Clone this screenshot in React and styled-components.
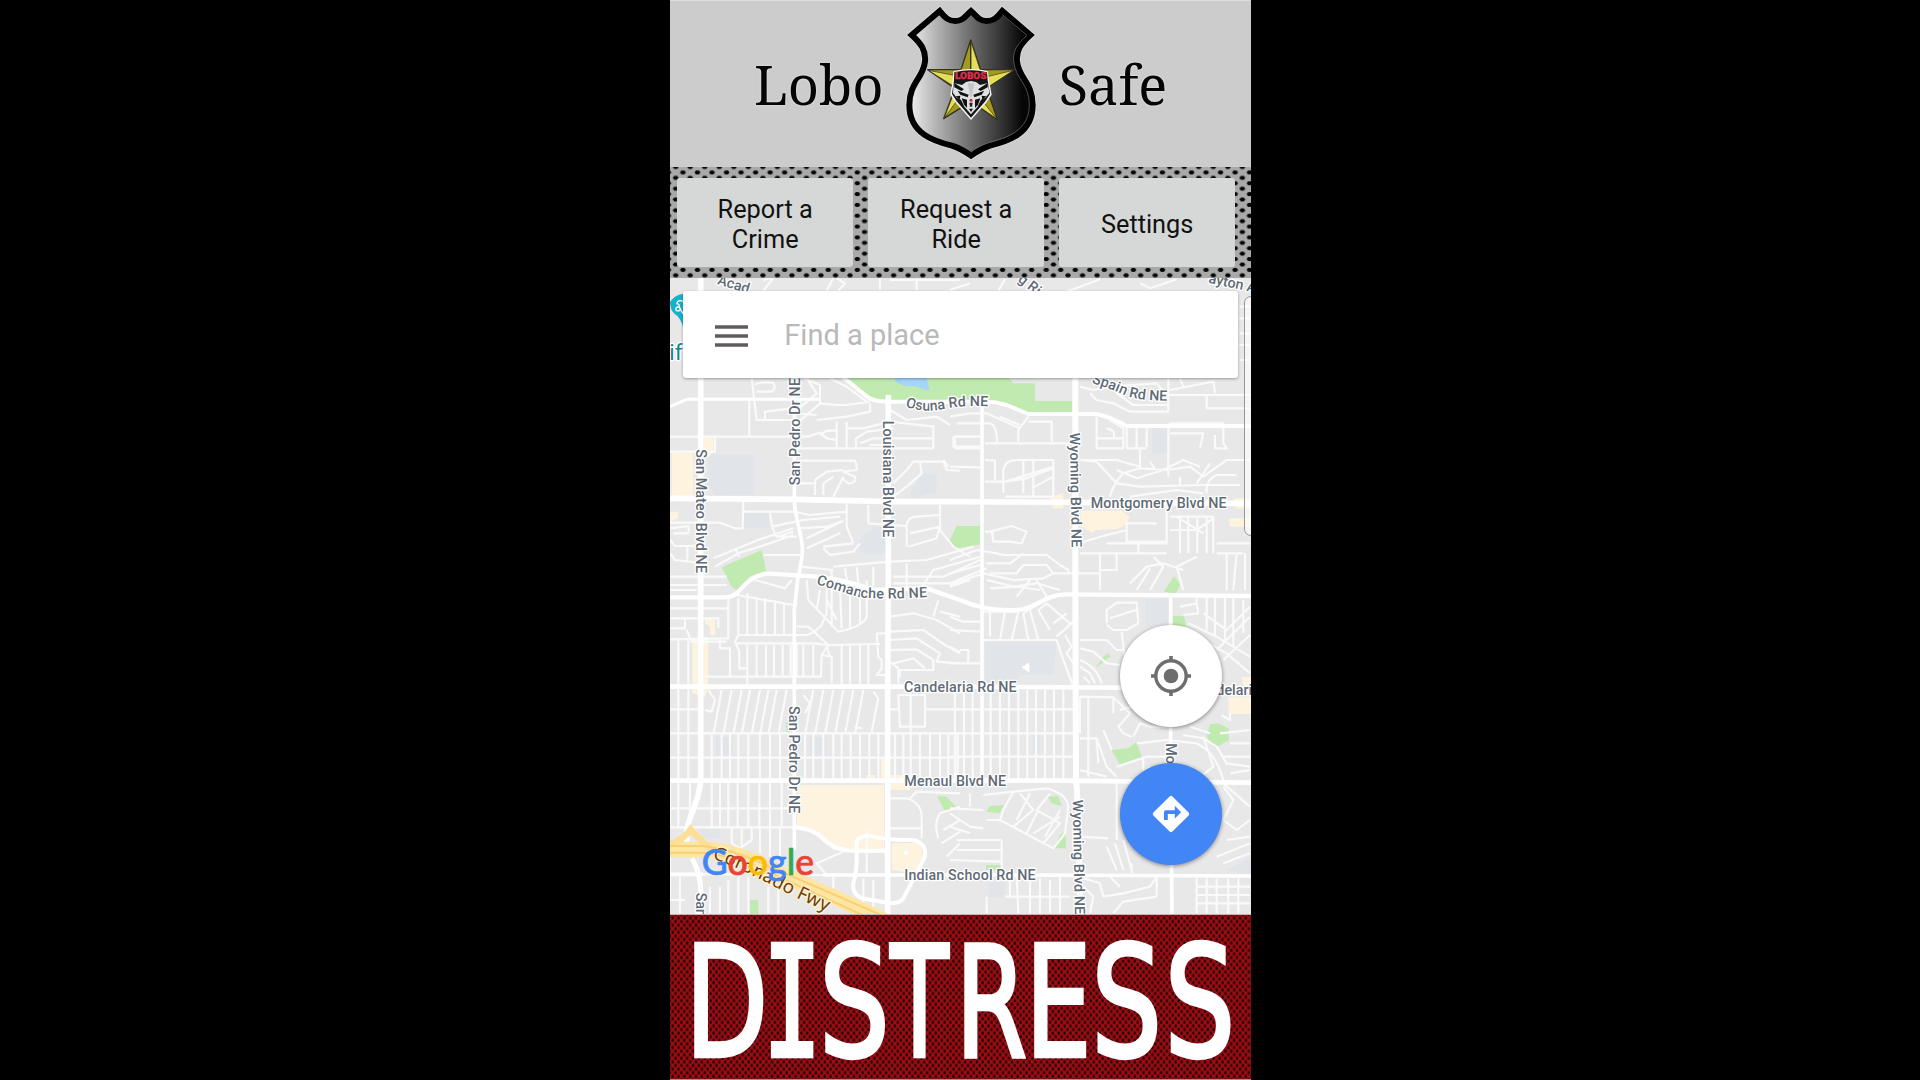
import React from "react";
import styled, { createGlobalStyle } from "styled-components";

const Global = createGlobalStyle`
  html, body { margin: 0; background: #000; overflow: hidden; }
  * { box-sizing: border-box; }
`;

const Stage = styled.main`
  display: flex;
  justify-content: center;
  width: 1920px;
  height: 1080px;
  padding-left: 1px;
  background: #000;
`;

const Phone = styled.div`
  display: flex;
  flex-direction: column;
  width: 581px;
  height: 1080px;
  overflow: hidden;
  background: #ccc;
  font-family: Roboto, "Liberation Sans", sans-serif;
`;

const Header = styled.header`
  display: flex;
  align-items: flex-start;
  flex: 0 0 167px;
  padding-left: 84px;
  border-top: 1px solid #dedede;
  background: #ccc;
`;

const Word = styled.span`
  flex: 0 0 ${(p) => p.$width}px;
  margin-top: 43px;
  font: 54px/80px "Noto Serif", "Droid Serif", "DejaVu Serif", serif;
  color: #050505;
  text-shadow: 0 0 2px #f4f4f4;
  white-space: nowrap;
  transform: scaleX(${(p) => p.$squeeze});
  transform-origin: 0 50%;
`;

const Badge = styled.svg`
  flex: 0 0 160px;
  height: 166px;
  margin: -1px 8.5px 0 7px;
`;

const Strip = styled.nav`
  position: relative;
  display: flex;
  flex: 0 0 111px;
  gap: 15.4px;
  padding: 11px 0 11px 7.4px;
  background: #a8a8a8;
`;

const Texture = styled.svg`
  position: absolute;
  inset: 0;
  width: 100%;
  height: 100%;
`;

const NavButton = styled.button`
  position: relative;
  flex: 0 0 175.6px;
  padding: 4px 30px 0;
  border: 0;
  border-radius: 3px;
  background: #d6d8d7;
  color: #111;
  font: 25.3px/29.7px Roboto, "Liberation Sans", sans-serif;
  text-align: center;
`;

const MapArea = styled.section`
  position: relative;
  flex: 0 0 636px;
  overflow: hidden;
  background: #e8e8e8;
`;

const MapCanvas = styled.svg`
  display: block;
  width: 581px;
  height: 636px;
`;

const SearchBar = styled.div`
  position: absolute;
  left: 13px;
  top: 13px;
  display: flex;
  align-items: center;
  gap: 36.3px;
  width: 555px;
  height: 86.5px;
  padding-left: 32px;
  border-radius: 3px;
  background: #fff;
  box-shadow: 0 1px 3px rgba(0, 0, 0, 0.35);
`;

const Burger = styled.svg`
  display: block;
  width: 33px;
  height: 22px;
  margin-top: 3px;
`;

const Placeholder = styled.span`
  margin-top: 2px;
  color: #b9b9b9;
  font-size: 29px;
  line-height: 34px;
`;

const EdgeHandle = styled.div`
  position: absolute;
  left: 573.5px;
  top: 18px;
  width: 20px;
  height: 239.5px;
  border: 1px solid #979797;
  border-radius: 7px;
  background: rgba(255, 255, 255, 0.6);
`;

const Fab = styled.button`
  position: absolute;
  left: 450px;
  top: ${(p) => p.$top}px;
  display: grid;
  place-items: center;
  width: 102px;
  height: 102px;
  padding: 0;
  border: 0;
  border-radius: 50%;
  background: ${(p) => p.$fill};
  box-shadow: 0 1px 4px rgba(0, 0, 0, 0.45);
`;

const Distress = styled.footer`
  position: relative;
  flex: 0 0 166px;
  border-top: 1px solid #c9b3b3;
  border-bottom: 1px solid #b08d8d;
  background: #960b11;
`;

const DistressWord = styled.svg`
  position: relative;
  display: block;
  width: 581px;
  height: 164px;
`;

/* ---------- map geometry, in thirds of a pixel ---------- */

const cols = (xs, y1, y2, slant = 0) => xs.map((x) => `M${x} ${y1}L${x - slant} ${y2}`).join("");
const rows = (ys, x1, x2) => ys.map((y) => `M${x1} ${y}H${x2}`).join("");

const majorRoads = [
  ["M122 24V1530C118 1610 75 1640 80 1715", 17],
  ["M95 1765C120 1800 125 1850 125 1940", 15],
  ["M403 300V690C404 740 424 790 427 830C430 870 412 920 412 940L403 1020V1740", 11],
  ["M685 375V950L683 1250V1940", 17],
  ["M966 410V1530", 11],
  ["M1246 320V950L1248 1530Q1256 1600 1260 1940", 18],
  ["M1532 980V1530L1536 1940", 11],
  ["M30 410L80 388H480", 9],
  ["M545 318L615 375Q635 395 680 395H960Q1000 392 1040 405L1105 432H1310Q1350 440 1400 468H1780", 12],
  ["M30 685L403 688L700 695H870L1780 700", 17],
  ["M30 982H190Q220 982 235 965Q280 910 330 911L470 920Q560 930 640 960L800 955L900 990Q980 1025 1070 1020C1130 1018 1150 973 1220 973L1780 978", 13],
  ["M30 1250H870L1780 1255", 14],
  ["M30 1532H1200L1780 1538", 14],
  ["M30 1813H130M490 1815H1100L1780 1818", 11],
  ["M405 1672Q450 1675 480 1698Q520 1740 570 1742H680M590 1742V1720Q592 1696 630 1697Q680 1712 760 1710Q800 1720 795 1760L730 1885Q720 1900 690 1900L605 1885Q575 1870 580 1840Q592 1800 590 1742", 12],
];

const minorA =
  "M275 325L290 450H400M285 345Q290 335 340 338Q350 355 335 365H290M268 390V500M30 500H390M165 500V545H30M300 500H440L480 488L500 505L530 510M400 535H820M315 450V425L400 415M440 325L470 370L400 430M430 325L480 345V400L400 470M480 400L530 405H560L630 395M510 325L560 350L620 395M470 450L560 440L630 425V400M400 430L470 435M480 495L500 482H530V455M530 455V535M560 455V535M560 475H610L690 455L820 470M588 535V505L620 485L700 475M600 520L640 505H820M630 525H700M820 465V535M690 420L740 450L830 440L870 465M880 500H960M880 500V530H960M410 572H585Q592 585 590 600L550 605L585 620Q590 640 565 640L545 625M465 675V630L500 605L550 600M490 675V640L520 620M520 680L550 620M410 640H460M700 640L740 600L760 575H850L860 600L900 602M780 575L785 610L740 650L700 680M850 570L865 590M250 690L248 775H225L180 758H30M248 725H400L450 735L560 725M330 730Q335 780 350 800H410M335 770L430 750L540 740M350 800L400 785M560 700V770L580 820M625 705V760L740 768M440 805L550 752M440 835L540 790M490 830L580 820M490 835L510 855L580 845L600 820M740 830V765Q745 740 770 740L840 735M745 830L830 805L840 765M750 790L840 770M840 705V780L880 830L930 860M420 775L500 770L550 752M160 865L300 808L400 775M165 890L235 850L330 820L400 795M225 835L238 862M310 855H430M30 775L85 768Q90 790 80 790H40M30 810L45 828H115M82 828V875M30 850L45 870L115 878M30 920H200M30 945H200M520 890L690 875L800 870L940 830M420 890L520 900M515 900V930M555 895L562 940M590 890L595 940M640 890V950M740 880V960M700 920H850L960 870M700 940L870 940L980 895M780 960L820 900L960 860M310 30L335 24M310 62L340 24M500 62L520 24M535 62L555 40L530 24M660 24V60M770 24V60M690 30H900";
const minorB =
  "M0 440L60 430H110L210 475M20 460H120Q140 465 142 520M15 500H80M15 535H90M15 500V535M105 520H380M205 515V480L235 440M150 440L210 465M235 455L305 455V515M105 570L135 572V635H105M105 635H165L310 590M160 670V600Q165 570 200 570H310V680H165M220 570V670M250 570V680M165 635L230 625L310 595M0 590L95 592M245 655L310 620M105 785H120L185 768L230 785L215 820L180 815L130 815L125 780M0 870L80 840L140 850L160 855H290L330 885L355 900V910M110 880H180L220 850M120 910H200L220 885H290L310 910H440M0 910L90 885M0 945L100 910L190 930L280 925L310 910M120 955L200 950L270 960M390 350L430 360L480 350L620 340L650 375H900M420 370L440 390L490 400L540 425H655V325M500 370L550 405H660M660 360L790 335L795 370M690 325L700 350M770 375V415H900M440 440V535H520V475L480 450M440 505H520M470 475Q500 480 490 505M530 475V535M560 475V535M590 475V530M530 535H590M655 460V620M660 490H760L750 535M660 460H820V520L830 535H795V495M570 540V590L500 570H400M390 570L440 575L500 640L570 650L760 645H870M480 680Q490 640 520 610L570 595L650 600L720 590L760 620L830 570L900 570M600 575L620 605M500 600L560 625L640 600L700 570L750 590M540 680L680 660L760 670M690 620L690 650M780 580L740 640M770 670Q765 630 800 615H860M390 850H650M390 910H450M450 850V960M500 850V900H450M400 815L470 795L530 780V760H620M530 780V815H650M470 820H650V700M565 820V850M660 740H790V850M690 740V850M715 740V850M742 740V850M770 740V850M660 780H740L790 745M680 740L760 790M830 850V960M860 850L850 960M885 850V960M800 850H880M800 820H900M540 940L590 890L640 880L700 900M560 960L600 895M600 960L640 890L610 860M700 960L680 890L740 860M860 90V320M868 110H900M868 145H900M868 190H900M868 225H900M868 270H900M0 60L60 40M145 62L165 28M350 65L450 28M570 40L600 55L680 28";
const minorC =
  "M30 85H205M205 50V175L30 178M30 115H175V145M75 115V145L30 145M80 150L95 185H200M30 30H110M230 45L400 75L412 70M285 0L375 25L395 0M235 55V165M262 40V165M290 50V165M315 55V165M345 60V165M372 72V165M225 185L235 165H440Q460 160 485 135L500 100V0M225 190H460L505 195L660 192M410 140H445L505 195L485 225L483 290H135M225 185L238 215V265H260M180 180V205H210V290M262 195V320M410 190V290M440 0L445 60L535 155Q610 140 620 110V0M470 90L480 30M500 60L530 120M515 0V140M540 20L545 145M570 40V145M600 40V130M650 160H690M650 160L655 230L665 240V265L650 285H690M430 195V290M460 195V290M485 225L515 230V310M510 230L500 200M690 110L760 100L830 120L900 160M835 60L820 110M690 155L790 150L855 195L900 220M690 180L770 175L840 220L830 245L900 250M690 210L770 208L820 240V270L720 270V290M700 250L760 235L795 265M690 245L715 265V310M840 95L900 110";
const gridC =
  cols([185, 215, 245, 270, 300, 325, 350, 380], 330, 458, 24) +
  cols([460, 490, 520, 550, 580, 610], 330, 458, 24) +
  cols([545, 570, 600, 625], 195, 315) +
  cols([290, 318, 342, 368, 392], 195, 290) +
  cols([55, 85], 175, 600) +
  cols([155, 185, 210, 235, 265, 300, 330, 360], 460, 600) +
  cols([435, 460, 490, 520, 545, 572, 600, 628, 655], 460, 600) +
  cols([705, 730, 752, 780, 810, 840, 865, 893], 460, 600) +
  cols([155, 180, 205, 233, 265, 298, 330, 365], 605, 740) +
  rows([460, 533], 30, 900) +
  rows([388], 30, 120) +
  rows([685, 742], 30, 403) +
  "M640 335L655 355L635 455M605 445L585 440M145 330L165 360L155 395L135 390M430 345L450 370L435 400M715 345H795V440H720ZM752 345V440M752 440V470M800 388H900M690 388H715M690 655H740Q785 670 785 710V775M690 745H785M750 655L770 635L900 640M835 775Q820 730 840 700L900 680M850 750L900 720M845 790L900 755M860 830L900 790M215 745V790L240 805L275 780V745M245 745V800M300 745V820M330 745V830M360 745V850M380 885H500L470 850L550 815M620 750V880M30 600V740M55 605V740M90 605V740M30 830V960M60 890V1000M30 960H75M150 920V1000M180 920V1000M205 900V1000M235 890V1000M265 890V1000M325 920V1000M355 930V1000M520 890V940M610 895V1000M640 900V1000M30 883H250";
const minorD =
  "M100 95H200M120 95V170M150 180L165 95M185 180L205 95M235 180L220 100L260 75M265 180L240 90M300 150L265 90L290 70L360 130M310 130L350 100M320 170L370 125M320 180L340 240L370 320M345 165L365 200L350 220L370 250M100 180H320M0 110L40 125H90M0 150L90 155M30 210H55V250M0 250H90M0 200L30 215M290 50L260 0M200 50L240 0M110 0L190 20L260 10L330 30M0 20L60 0M470 130V90L500 68H560L565 130L530 150H490L470 135M480 115L540 95L562 90M515 155L525 240L545 320M390 180H470L500 210H525M390 205L430 215L470 250L510 255M390 240Q440 260 455 310M390 260L420 280L435 310M400 290L420 310M690 80L740 70L745 100L700 105M740 50V75M770 50V150M795 50V170M825 50V180M850 50V200M880 60V160M715 130L800 170L900 230M760 100L830 150L900 80M800 210L900 110M820 240L900 165M720 160L830 220L900 280M390 350L490 352L540 400L505 440L520 460L545 470M490 355V400M510 390L550 380M550 470L570 430L600 440H660M390 475H440L470 560L500 590M415 350V590M440 480L445 550M390 350V460M460 450L485 510M390 570L470 590M500 560L590 530H660M560 490L650 480L740 490Q800 520 820 600M580 590V530M600 570L660 555M560 590L600 560M700 465L760 475L800 500L830 550L900 560M720 440L780 460M760 470L790 560L740 600M815 405L840 420V400M810 460L900 450M840 490H900M840 580L900 570M820 530L900 530M100 645L190 635L290 625Q350 640 355 680L345 760L310 805M190 635L160 690L150 720L310 805M110 720L150 720M210 640L250 690L190 740M240 640L200 720M265 690L230 760M300 640L260 690L330 730L280 790M330 690L285 770M250 760L330 710M0 685L100 690M0 700L60 740L100 745M20 780H155M20 810H155M0 840L155 845M155 780V880M0 740L60 760M60 640V680M390 770L475 775M470 800L500 870M495 790L520 870M520 780L545 870M545 850V880M500 610V780M400 895L450 910L460 950L520 940L600 920L620 890V950L520 965L490 1000M400 920L430 950L420 1000M480 890L510 920M740 895V1000M770 895V1000M800 895V1000M835 895V1000M865 895V1000M740 920H900M740 945H900M740 970H900M820 620L850 660L820 720L860 750L900 720M820 610L900 680M830 780L900 770M800 830L850 810L900 790M820 850L900 820M180 890V950M200 890L205 1000M240 900V1000M270 895V1000M300 900V1000M330 890V1000M165 950H360M110 950V1000";
const gridD =
  cols([15, 42, 68, 122, 150, 177, 205, 232, 258, 285, 312, 340], 330, 600) +
  rows([388, 460, 530], 0, 370);

const parks = [
  "M560 322H1045L1060 340H1125V393H1238V428H1110L1035 402Q960 390 690 390Q640 392 620 378Z",
  "M185 892L305 840L318 902L270 918L232 962L215 950Z",
  "M890 768H962V823L890 835L865 820Z",
  "M1515 960L1543 917L1560 945L1548 970L1512 965Z",
  "M1538 1038L1572 1038L1578 1070L1540 1070Z",
  "M1308 1192L1330 1160Q1350 1142 1350 1160L1312 1190Z",
  "M1355 1440L1405 1435L1430 1415L1445 1460L1380 1485Z",
  "M1650 1363L1675 1360L1705 1375L1707 1410L1665 1433L1640 1400Z",
  "M830 1578L860 1580L892 1615L855 1622Z",
  "M978 1625L990 1608L1032 1605L1018 1630Z",
  "M1163 1580L1195 1578L1205 1608L1175 1600Z",
  "M1218 1683L1217 1735L1185 1735L1200 1695Z",
  "M270 1890H295V1940H270Z",
  "M378 1360L390 1340L400 1390H380Z",
  "M978 1785H1025V1800H978Z",
];
const sands = [
  "M35 548L100 550V678H35ZM132 500L160 505V535L150 560L132 550Z",
  "M30 725L55 725V745L30 755Z",
  "M97 1105L145 1100V1250L135 1280L97 1270ZM135 1045L165 1050V1095H150V1070L135 1060Z",
  "M415 1545H672V1740H520L475 1690L410 1670Z",
  "M695 1720L780 1718L790 1760L765 1810L695 1800Z",
  "M1262 722H1385L1408 740Q1405 765 1370 778L1305 780L1300 790L1262 770Z",
  "M1170 680L1210 670V715H1180ZM1706 745H1775V770H1710ZM1720 685H1775V715H1730Z",
  "M1705 1282H1775V1332H1705ZM1745 1220H1775V1250H1750Z",
  "M690 1515H750V1560H690ZM620 1515H645V1530H620ZM663 1465H675V1525H663Z",
];
const blues = [
  "M145 555H285V675H165L145 640Z",
  "M252 730H328V775H252Z",
  "M750 670L785 610L830 615V665L760 685Z",
  "M605 800L640 770H680V850L620 855L590 830Z",
  "M1475 475H1523V550H1475Z",
  "M975 1117H1190L1180 1215H1075V1240H975Z",
  "M1455 985H1525V1070H1455Z",
  "M168 1400H218V1455H168ZM450 1400H500V1455H450Z",
  "M985 1835H1035V1880H985ZM1700 1800L1775 1760V1815ZM1120 1395H1140V1450H1120Z",
  "M115 1670H180V1705H130Z",
];

const labels = [
  { t: "San Mateo Blvd NE", x: 109, y: 538, r: 90, len: 371 },
  { t: "San Pedro Dr NE", x: 420, y: 646, r: -90, len: 322 },
  { t: "Louisiana Blvd NE", x: 670, y: 452, r: 90, len: 350 },
  { t: "Wyoming Blvd NE", x: 1229, y: 488, r: 89, len: 344 },
  { t: "Montgomery Blvd NE", x: 1292, y: 713, r: 0, len: 408 },
  { t: "Candelaria Rd NE", x: 732, y: 1267, r: 0, len: 338 },
  { t: "Menaul Blvd NE", x: 733, y: 1549, r: 0, len: 305 },
  { t: "Indian School Rd NE", x: 733, y: 1829, r: 0, len: 394 },
  { t: "San Pedro Dr NE", x: 388, y: 1308, r: 90, len: 322 },
  { t: "Wyoming Blvd NE", x: 1238, y: 1589, r: 88.9, len: 344 },
  { t: "Mo", x: 1519, y: 1420, r: 90 },
  { t: "San", x: 109, y: 1868, r: 90 },
  { t: "delaria", x: 1669, y: 1275, r: 0 },
  { t: "Acad", x: 170, y: 42, r: 17 },
  { t: "g Ri", x: 1072, y: 32, r: 38 },
  { t: "ayton A", x: 1644, y: 38, r: 12 },
];

const Label = styled.text`
  font: 500 43px Roboto, "Liberation Sans", sans-serif;
  fill: #5f6b76;
  stroke: #fff;
  stroke-width: 8px;
  stroke-linejoin: round;
  paint-order: stroke;
`;

const HighwayLabel = styled(Label)`
  font: 400 56px "Noto Sans", "Open Sans", sans-serif;
  fill: #6f3b12;
  stroke: #fff3cd;
`;

const PlaceLabel = styled(Label)`
  font-size: 66px;
  font-weight: 400;
  fill: #12838f;
`;

const Logo = styled.text`
  font: 500 110px Lato, "Open Sans", sans-serif;
`;

const LogoLetter = styled.tspan`
  fill: ${(p) => p.$color};
  stroke: ${(p) => p.$color};
  stroke-width: 2px;
`;

function StreetMap() {
  return (
    <MapCanvas viewBox="30 24 1743 1908" preserveAspectRatio="none">
      {blues.map((d) => <path key={d} d={d} fill="#e1e5e9" />)}
      {sands.map((d) => <path key={d} d={d} fill="#fdf3df" />)}
      {parks.map((d) => <path key={d} d={d} fill="#c1eab0" />)}
      <path d="M705 322H800L808 362L770 350L735 348L705 335Z" fill="#a5d5fb" />
      <g fill="none" stroke="#fafafa" strokeWidth="6.5" strokeLinejoin="round">
        <path d={minorA} />
        <path d={minorB} transform="translate(870 0)" />
        <path d={minorC + gridC} transform="translate(0 930)" />
        <path d={minorD + gridD} transform="translate(870 930)" />
      </g>
      <g fill="none" stroke="#fff" strokeLinejoin="round">
        {majorRoads.map(([d, w]) => <path key={d} d={d} strokeWidth={w} />)}
      </g>
      <circle cx="738" cy="1748" r="7" fill="#fff" />
      <path d="M1085 1192L1108 1177V1208Z" fill="#fff" />
      <g fill="none">
        <path d="M20 1738H110Q200 1734 310 1787T520 1880L670 1950" stroke="#fde5a2" strokeWidth="46" />
        <path d="M20 1725Q70 1712 92 1678Q110 1700 150 1735" stroke="#fbdf95" strokeWidth="19" />
        <path d="M20 1728H130Q220 1738 320 1786L670 1938M20 1748H110Q190 1748 290 1790L640 1950" stroke="#f9d076" strokeWidth="6" />
      </g>

      <path id="osuna" d="M736 410Q800 432 870 413Q930 405 1000 410" fill="none" />
      <Label><textPath href="#osuna">Osuna Rd NE</textPath></Label>
      <path id="spain" d="M1294 339Q1350 355 1400 378Q1440 393 1560 393" fill="none" />
      <Label><textPath href="#spain">Spain Rd NE</textPath></Label>
      <path id="comanche" d="M468 942Q540 965 600 982Q660 990 830 980" fill="none" />
      <Label><textPath href="#comanche" textLength="340">Comanche Rd NE</textPath></Label>
      {labels.map(({ t, x, y, r, len }) => (
        <Label key={t + x} transform={`translate(${x} ${y}) rotate(${r})`} textLength={len}>{t}</Label>
      ))}
      <path id="fwy" d="M156 1765Q240 1795 330 1843T530 1937" fill="none" />
      <HighwayLabel>
        <textPath href="#fwy" textLength="380">Coronado Fwy</textPath>
      </HighwayLabel>

      <path d="M70 174Q64 145 42 130Q30 118 30 95Q48 72 70 72Z" fill="#15b2c9" />
      <path d="M70 94Q52 88 51 101Q61 104 57 111Q44 110 49 122Q62 125 62 113M57 111L69 131" fill="none" stroke="#fff" strokeWidth="4" />
      <PlaceLabel x="28" y="271">ift</PlaceLabel>

      <Logo x="125" y="1816" textLength="337" lengthAdjust="spacingAndGlyphs">
        <LogoLetter $color="#4285f4">G</LogoLetter>
        <LogoLetter $color="#ea4335">o</LogoLetter>
        <LogoLetter $color="#fbbc05">o</LogoLetter>
        <LogoLetter $color="#4285f4">g</LogoLetter>
        <LogoLetter $color="#34a853">l</LogoLetter>
        <LogoLetter $color="#ea4335">e</LogoLetter>
      </Logo>
    </MapCanvas>
  );
}

const SHIELD =
  "M149 33C166 54 176 63 196 63C220 63 228 46 243 33C258 46 266 63 290 63C310 63 320 54 337 33L421 105C392 131 378 152 381 184C386 235 428 248 428 315C428 402 352 424 300 437C273 446 257 457 243 467C229 457 213 446 186 437C134 424 58 402 58 315C58 248 100 235 105 184C108 152 94 131 65 105Z";

function Shield() {
  return (
    <Badge viewBox="0 0 480 498">
      <defs>
        <linearGradient id="steel" x1="0" x2="1">
          <stop offset="0.03" stopColor="#e8e8e8" />
          <stop offset="0.2" stopColor="#b8b8b8" />
          <stop offset="0.5" stopColor="#6c6c6c" />
          <stop offset="0.75" stopColor="#333" />
          <stop offset="0.92" stopColor="#060606" />
        </linearGradient>
      </defs>
      <path d={SHIELD} fill="none" stroke="#dcdcdc" strokeWidth="23" />
      <path d={SHIELD} fill="url(#steel)" stroke="#000" strokeWidth="18" />
      <path
        d="M337 44L411 106C380 133 368 155 371 184C376 238 418 250 418 315C418 394 346 414 297 428C273 436 257 445 243 456"
        fill="none" stroke="#8a8a8a" strokeWidth="1.6"
      />
      <g stroke="#33321c" strokeWidth="4" strokeLinejoin="round">
        <path d="M242 120L272 209H372L290 265L322 358L242 305L161 356L195 265L113 209H213Z" fill="#a39a20" />
        <path d="M242 122L270 209L242 240ZM370 211L290 264L250 240ZM320 356L243 303V260ZM163 354L197 265L230 262ZM115 211L213 230L200 264Z" fill="#e4de58" strokeWidth="2" />
        <path d="M242 120V240" />
      </g>
      <path d="M190 214Q243 200 294 214L297 240L305 284L290 307L243 360L196 307L181 284L188 240Z" fill="#f4f4f4" />
      <path d="M193 217Q243 204 291 217L293 242L300 282L286 304L243 353L200 304L186 282L192 242Z" fill="#161616" />
      <path d="M191 249L216 255L228 246L243 243L258 246L270 255L294 249L298 279L286 293L273 299L263 320L243 343L223 320L213 299L200 293L189 279Z" fill="#dfe2e3" />
      <path d="M192 248L222 268L214 273L193 262ZM294 248L264 268L272 273L293 262ZM203 272L236 284L233 292L211 284ZM283 272L250 284L253 292L275 284ZM197 289L211 287L209 299ZM289 289L275 287L277 299ZM215 295L231 299L231 324L222 314ZM271 295L255 299L255 324L264 314ZM237 326H249L243 336Z" fill="#111" />
      <path d="M233 250H253L249 272L246 290H240L237 272Z" fill="#c3c7ca" />
      <circle cx="243" cy="301" r="4.5" fill="#c9243b" />
      <path d="M238 308H248L246 320H240Z" fill="#222" />
      <text x="195" y="238" textLength="94" lengthAdjust="spacingAndGlyphs" fill="#de2e49" stroke="#de2e49" strokeWidth="1" fontFamily="Roboto, sans-serif" fontWeight="900" fontSize="29">LOBOS</text>
    </Badge>
  );
}

// x: left ink edge, w: ink width; lsb and ink are font metrics per em
const word = [
  { c: "D", x: 24.2, w: 69, lsb: 0.098, ink: 0.613 },
  { c: "I", x: 101, w: 42.5, lsb: 0.098, ink: 0.406, mono: true },
  { c: "S", x: 155, w: 60, lsb: 0.066, ink: 0.513 },
  { c: "T", x: 218.8, w: 61.3, lsb: -0.003, ink: 0.617 },
  { c: "R", x: 294.2, w: 61, lsb: 0.098, ink: 0.568 },
  { c: "E", x: 364.2, w: 51, lsb: 0.098, ink: 0.461 },
  { c: "S", x: 427.3, w: 60, lsb: 0.066, ink: 0.513 },
  { c: "S", x: 500.6, w: 60, lsb: 0.066, ink: 0.513 },
];
const EM = 154.5;
const EDGE = 4.4;

const Capital = styled.text`
  font: ${EM}px ${(p) => (p.$mono ? '"DejaVu Sans Mono"' : '"DejaVu Sans"')}, sans-serif;
  fill: #fff;
  stroke: #fff;
  stroke-width: ${EDGE}px;
`;

export default function App() {
  return (
    <>
      <Global />
      <Stage>
        <Phone>
          <Header>
            <Word $width={127} $squeeze={1.004}>Lobo</Word>
            <Shield />
            <Word $width={110} $squeeze={1}>Safe</Word>
          </Header>

          <Strip>
            <Texture>
              <defs>
                <pattern id="mesh" width="14.53" height="10.83" patternUnits="userSpaceOnUse" x="5.7" y="-5.4">
                  <rect width="14.53" height="10.83" fill="#a9a9a9" />
                  <path d="M-3 5.4L-1.4 3.4H1.4L3 5.4L1.4 7.4H-1.4ZM11.53 5.4L13.1 3.4H16V7.4H13.1ZM4.2 0H10.3L8.7 2H5.8ZM4.2 10.83L5.8 8.83H8.7L10.3 10.83Z" fill="#050505" />
                </pattern>
              </defs>
              <rect width="100%" height="100%" fill="url(#mesh)" />
            </Texture>
            <NavButton>Report a Crime</NavButton>
            <NavButton>Request a Ride</NavButton>
            <NavButton>Settings</NavButton>
          </Strip>

          <MapArea>
            <StreetMap />
            <EdgeHandle />
            <SearchBar>
              <Burger viewBox="0 0 33 22" stroke="#615c5c" strokeWidth="3.5">
                <path d="M0 2.1H33M0 11.1H33M0 20.1H33" />
              </Burger>
              <Placeholder>Find a place</Placeholder>
            </SearchBar>
            <Fab $top={346.5} $fill="#fff" aria-label="My location">
              <svg width="40" height="40" viewBox="0 0 40 40" fill="none" stroke="#6e6e6e">
                <circle cx="20" cy="20" r="15.2" strokeWidth="3.4" />
                <path d="M20 0V6M20 34V40M0 20H6M34 20H40" strokeWidth="3.6" />
                <circle cx="20" cy="20" r="7.3" fill="#6e6e6e" stroke="none" />
              </svg>
            </Fab>
            <Fab $top={484.5} $fill="#4285f4" aria-label="Directions">
              <svg width="38" height="38" viewBox="0 0 38 38">
                <path d="M17.6 1.4Q19 0 20.4 1.4L36.6 17.6Q38 19 36.6 20.4L20.4 36.6Q19 38 17.6 36.6L1.4 20.4Q0 19 1.4 17.6Z" fill="#fff" />
                <path d="M12 25V17.2Q12 15.2 14 15.2H22.8V10.8L29.2 17.2L22.8 23.4V19H15.8V25Z" fill="#4285f4" />
              </svg>
            </Fab>
          </MapArea>

          <Distress>
            <Texture>
              <defs>
                <pattern id="redmesh" width="5.85" height="7.2" patternUnits="userSpaceOnUse" x="1" y="1">
                  <rect width="5.85" height="7.2" fill="#9c0c12" />
                  <path d="M0.6 0.5H2.6V3.3H0.6ZM3.5 4.1H5.5V6.9H3.5Z" fill="#0c0203" />
                </pattern>
              </defs>
              <rect width="100%" height="100%" fill="url(#redmesh)" />
            </Texture>
            <DistressWord viewBox="0 0 581 164">
              {word.map(({ c, x, w, lsb, ink, mono }, i) => {
                const s = w / (ink * EM + EDGE);
                const left = x - (lsb * EM - EDGE / 2) * s;
                return (
                  <Capital key={i} $mono={mono} transform={`translate(${left} 141.2) scale(${s} 0.995)`}>{c}</Capital>
                );
              })}
            </DistressWord>
          </Distress>
        </Phone>
      </Stage>
    </>
  );
}
